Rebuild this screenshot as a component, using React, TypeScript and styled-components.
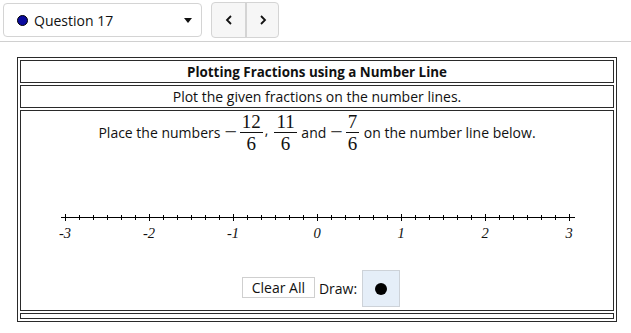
import styled, { createGlobalStyle } from "styled-components";

const GlobalStyle = createGlobalStyle`
  body {
    margin: 0;
    background: #fff;
    font-family: "Open Sans", "Noto Sans", sans-serif;
    color: #111;
  }
`;

const TICKS = Array.from({ length: 37 }, (_, i) => i);
const LABELS = ["-3", "-2", "-1", "0", "1", "2", "3"];

const Fraction = ({ top, bottom }: { top: string; bottom: string }) => (
  <Frac>
    <Num>{top}</Num>
    <Den>{bottom}</Den>
  </Frac>
);

const NumberLine = () => {
  const x0 = 13;
  const unit = 84;
  return (
    <LineSvg width={530} height={60} viewBox="0 0 530 60">
      <line x1={9} y1={26.5} x2={523} y2={26.5} stroke="#000" strokeWidth={1} />
      {TICKS.map((i) => {
        const x = Math.round(x0 + (i * unit) / 6) + 0.5;
        const major = i % 6 === 0;
        return (
          <line
            key={i}
            x1={x}
            x2={x}
            y1={major ? 23 : 24}
            y2={major ? 30 : 29}
            stroke="#000"
            strokeWidth={1}
          />
        );
      })}
      {LABELS.map((l, i) => (
        <text
          key={l}
          x={x0 + i * unit}
          y={47}
          textAnchor="middle"
          fontFamily="'Liberation Serif', serif"
          fontStyle="italic"
          fontSize={14.5}
          fill="#111"
        >
          {l}
        </text>
      ))}
    </LineSvg>
  );
};

export default function App() {
  return (
    <>
      <GlobalStyle />
      <TopBar>
        <Select>
          <Dot />
          <SelectLabel>Question 17</SelectLabel>
          <Caret viewBox="0 0 8 5" width={8} height={5}>
            <path d="M0 0 H8 L4 5 Z" fill="#111" />
          </Caret>
        </Select>
        <NavGroup>
          <NavButton aria-label="previous">
            <svg width="8" height="10" viewBox="0 0 8 10">
              <path d="M6 1 L2 5 L6 9" fill="none" stroke="#111" strokeWidth="1.8" />
            </svg>
          </NavButton>
          <NavButton aria-label="next" $divider>
            <svg width="8" height="10" viewBox="0 0 8 10">
              <path d="M2 1 L6 5 L2 9" fill="none" stroke="#111" strokeWidth="1.8" />
            </svg>
          </NavButton>
        </NavGroup>
      </TopBar>
      <Main>
        <Frame>
          <Cell $h={23}>
            <Title>Plotting Fractions using a Number Line</Title>
          </Cell>
          <Cell $h={23}>
            <Instruction>Plot the given fractions on the number lines.</Instruction>
          </Cell>
          <ContentCell>
            <Sentence>
              <span>Place the numbers</span>
              <Minus>−</Minus>
              <Fraction top="12" bottom="6" />
              <Comma>,</Comma>
              <Fraction top="11" bottom="6" />
              <span>&nbsp;and</span>
              <Minus>−</Minus>
              <Fraction top="7" bottom="6" />
              <span>&nbsp;on the number line below.</span>
            </Sentence>
            <NumberLine />
            <Controls>
              <ClearButton>Clear All</ClearButton>
              <DrawLabel>Draw:</DrawLabel>
              <DrawTool>
                <ToolDot />
              </DrawTool>
            </Controls>
          </ContentCell>
          <Cell $h={6} />
        </Frame>
      </Main>
    </>
  );
}

const TopBar = styled.div`
  display: flex;
  align-items: center;
  gap: 9px;
  padding: 3px 3px 4px;
  box-sizing: border-box;
  border-bottom: 1px solid #d0d0d0;
  height: 42px;
`;

const Select = styled.div`
  display: flex;
  align-items: center;
  width: 199px;
  height: 34px;
  box-sizing: border-box;
  padding: 0 9px 0 13px;
  border: 1px solid #d4d4d4;
  border-radius: 4px;
  background: #fff;
`;

const Dot = styled.span`
  width: 11px;
  height: 11px;
  border-radius: 50%;
  background: #0a0a9e;
  border: 1px solid #000;
  box-sizing: border-box;
  margin-right: 6px;
`;

const SelectLabel = styled.span`
  flex: 1;
  font-size: 14px;
  color: #111;
`;

const Caret = styled.svg`
  display: block;
`;

const NavGroup = styled.div`
  display: flex;
  height: 34px;
  border: 1px solid #d4d4d4;
  border-radius: 4px;
  overflow: hidden;
  background: #f6f6f6;
`;

const NavButton = styled.button<{ $divider?: boolean }>`
  width: 33px;
  height: 100%;
  border: none;
  border-left: ${(p) => (p.$divider ? "2px solid #d4d4d4" : "none")};
  background: transparent;
  padding: 0;
  display: flex;
  align-items: center;
  justify-content: center;
`;

const Main = styled.div`
  padding: 15px 0 0 17px;
`;

const Frame = styled.div`
  width: 600px;
  box-sizing: border-box;
  border: 1px solid #2a2a2a;
  padding: 2px;
  display: flex;
  flex-direction: column;
  gap: 2px;
`;

const Cell = styled.div<{ $h: number }>`
  height: ${(p) => p.$h}px;
  box-sizing: border-box;
  border: 1px solid #2a2a2a;
  display: flex;
  align-items: center;
  justify-content: center;
`;

const Title = styled.div`
  font-size: 13.4px;
  font-weight: 700;
`;

const Instruction = styled.div`
  font-size: 14px;
`;

const ContentCell = styled.div`
  height: 201px;
  box-sizing: border-box;
  border: 1px solid #2a2a2a;
  padding-top: 1px;
  display: flex;
  flex-direction: column;
  align-items: center;
`;

const Sentence = styled.div`
  display: flex;
  align-items: center;
  font-size: 14px;
  height: 40px;
`;

const Minus = styled.span`
  font-family: "Liberation Serif", serif;
  font-size: 22px;
  line-height: 22px;
  margin: 0 2px 0 4px;
  color: #444;
`;

const Comma = styled.span`
  margin: 0 5px 0 1px;
  font-size: 14px;
  line-height: 19px;
  padding-bottom: 5px;
`;

const Frac = styled.span`
  display: inline-flex;
  flex-direction: column;
  align-items: center;
  font-family: "Liberation Serif", serif;
  font-size: 19px;
  line-height: 19px;
  padding: 0 1px;
`;

const Num = styled.span`
  padding: 0 2px 1px;
  border-bottom: 1px solid #111;
`;

const Den = styled.span`
  padding: 1px 2px 0;
`;

const LineSvg = styled.svg`
  display: block;
  margin-top: 39px;
`;

const Controls = styled.div`
  display: flex;
  align-items: center;
  margin: 19px 0 0 8px;
  font-size: 14px;
`;

const ClearButton = styled.button`
  font-family: inherit;
  font-size: 14px;
  color: #111;
  width: 73px;
  height: 21px;
  border: 1px solid #cfcfcf;
  background: #fff;
  padding: 0;
  margin-top: -2px;
`;

const DrawLabel = styled.span`
  margin: 0 5px 0 4px;
`;

const DrawTool = styled.div`
  width: 38px;
  height: 37px;
  box-sizing: border-box;
  border: 1px solid #cdd2d8;
  background: #e5eef8;
  display: flex;
  align-items: center;
  justify-content: center;
`;

const ToolDot = styled.span`
  width: 12px;
  height: 12px;
  border-radius: 50%;
  background: #000;
`;
